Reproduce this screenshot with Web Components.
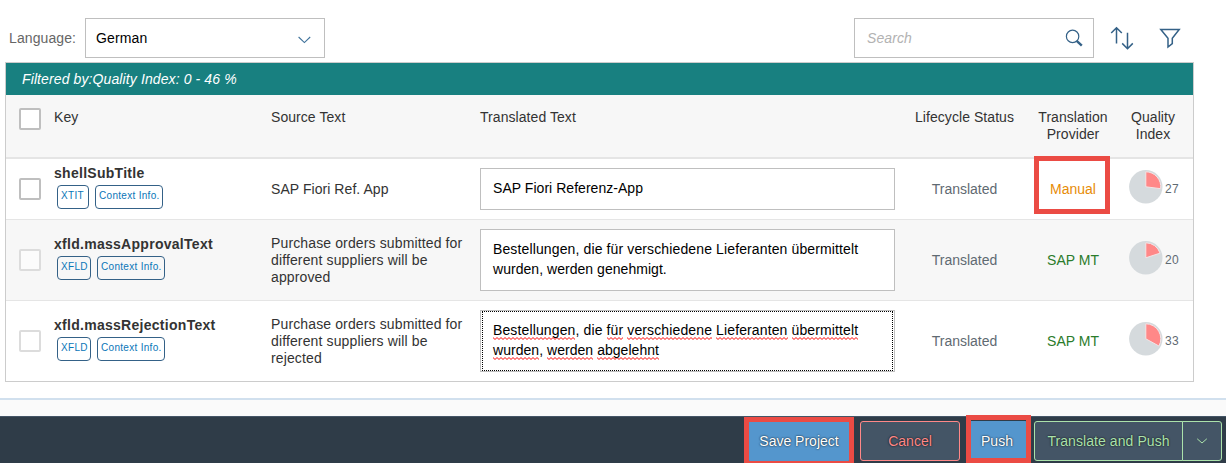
<!DOCTYPE html>
<html lang="en">
<head>
<meta charset="utf-8">
<title>Translation Editor</title>
<style>
html,body{margin:0;padding:0;background:#fff;overflow:hidden}
body{font:14px/17px "Liberation Sans",Arial,sans-serif;color:#333;width:1226px;height:463px}
</style>
</head>
<body>
<translation-page></translation-page>
<script>
const define = (name, html, init) => customElements.define(name, class extends HTMLElement {
  constructor() {
    super();
    const t = document.createElement('template');
    t.innerHTML = html;
    this.attachShadow({ mode: 'open' }).append(t.content.cloneNode(true));
  }
  connectedCallback() { if (init) init(this, this.shadowRoot); }
});

define('select-field', `<style>
:host{display:flex;box-sizing:border-box;width:240px;height:40px;border:1px solid #bfbfbf;background:#fff;align-items:center;justify-content:space-between;padding:0 13px 0 10px;color:#000;letter-spacing:.12px}
svg{display:block;margin-top:3px}
</style><span><slot></slot></span><svg width="13" height="8" viewBox="0 0 13 8"><path d="M.6 1 6.4 6.6 12.2 1" fill="none" stroke="#3f729b" stroke-width="1.1"/></svg>`);

define('search-field', `<style>
:host{display:flex;box-sizing:border-box;width:240px;height:40px;border:1px solid #bfbfbf;background:#fff;align-items:center;justify-content:space-between;padding:0 10px 0 12px;color:#b2b2b2;font-style:italic;letter-spacing:.1px}
svg{display:block}
</style><span><slot></slot></span><svg width="18" height="18" viewBox="0 0 18 18" fill="none" stroke="#346187"><circle cx="7.6" cy="7.4" r="6.2" stroke-width="1.2"/><path d="M11.7 11.8 16.8 16.6" stroke-width="2.4"/></svg>`);

define('tool-bar', `<style>
:host{display:flex;height:44px;padding:18px 45px 0 9px;align-items:flex-start}
.label{color:#666;width:76px;line-height:40px;letter-spacing:.1px}
.gap{flex:1}
.icon{display:flex;height:40px;align-items:center}
.sort{margin-left:16px}.filter{margin-left:25px}
</style>
<span class="label">Language:</span><select-field>German</select-field><span class="gap"></span><search-field>Search</search-field>
<span class="icon sort"><svg width="24" height="24" viewBox="0 0 24 24" fill="none" stroke="#346187" stroke-width="1.5"><path d="M6.5 17.6V2M1.2 7 6.5 1.7 11.8 7"/><path d="M17.5 6.8V22.6M12.2 17.4 17.5 22.7 22.8 17.4"/></svg></span>
<span class="icon filter"><svg width="22" height="22" viewBox="0 0 22 22" fill="none" stroke="#346187" stroke-width="1.5"><path d="M1.8 2.5H20.2L13.3 11.2V16.6L9 20V11.2Z"/></svg></span>`);

define('check-box', `<style>
:host{display:block;box-sizing:border-box;width:22px;height:22px;border:2px solid #bfbfbf;border-radius:2px;background:#fff}
:host([disabled]){border-color:#dcdcdc;background:rgba(255,255,255,.5)}
</style>`);

define('tag-chip', `<style>
:host{display:block;box-sizing:border-box;height:24px;border:1px solid #346187;border-radius:4px;padding:4px 3px 0;font-size:10px;line-height:12px;color:#0a76b8;white-space:nowrap;letter-spacing:.3px}
</style><slot></slot>`);

define('quality-pie', `<style>
:host{display:flex;align-items:center;font-size:12px;color:#5f6a72;letter-spacing:.25px}
svg{display:block;margin-top:-4px;margin-right:2px}
</style><svg width="34" height="34" viewBox="0 0 34 34"><circle cx="16.8" cy="16.8" r="16.7" fill="#d5dadd"/><path fill="#ff8888" stroke="#f3e4e6" stroke-width="1"/></svg><span></span>`,
(h, r) => {
  const v = +h.getAttribute('value'), a = v / 100 * 2 * Math.PI, R = 15;
  r.querySelector('path').setAttribute('d', `M16.8 16.8V${16.8 - R}A${R} ${R} 0 0 1 ${16.8 + R * Math.sin(a)} ${16.8 - R * Math.cos(a)}Z`);
  r.querySelector('span').textContent = v;
});

define('text-area', `<style>
:host{display:block;position:relative;box-sizing:border-box;width:415px;border:1px solid #bfbfbf;background:#fff;color:#000;padding:9px 12px 11px;line-height:20px;white-space:nowrap;letter-spacing:.04px}
:host([focused])::after{content:"";position:absolute;inset:0 1px;border:1px dotted #000}
</style><slot></slot>`);

define('miss-spelled', `<style>
:host{display:inline;padding-bottom:2px;background:url("data:image/svg+xml,%3Csvg xmlns='http://www.w3.org/2000/svg' width='4' height='3'%3E%3Cpath d='M-1 -.5 0 .5 2 2.5 4 .5 5 -.5' fill='none' stroke='red' stroke-width='1'/%3E%3C/svg%3E") left bottom/4px 3px repeat-x}
</style><slot></slot>`);

const COLS = '48px 217px 209px 419px 131px 86px 74px';
define('header-row', `<style>
:host{display:grid;grid-template-columns:${COLS};box-sizing:border-box;height:64px;background:#f7f7f7;border-bottom:2px solid #e5e5e5;padding-top:14px;letter-spacing:.06px}
check-box{margin:-1px 0 0 13px}.c{text-align:center}
</style><check-box></check-box><span>Key</span><span>Source Text</span><span>Translated Text</span><span class="c">Lifecycle Status</span><span class="c">Translation<br>Provider</span><span class="c">Quality<br>Index</span>`);

define('table-row', `<style>
:host{display:grid;grid-template-columns:${COLS};align-items:center;box-sizing:border-box;height:81px;border-bottom:1px solid #e5e5e5}
:host([short]){height:61px}
:host([last]){height:80px;border:0}
:host([alt]){background:#f7f7f7}
check-box{margin-left:13px}
.key b{display:block;letter-spacing:.28px;line-height:17px}
.tags{display:flex;gap:6px;padding:3px 0 0 3px}
.type{width:34px}.info{width:68px}
:host([type=XTIT]) .type{width:32px}
.key{margin-top:-5px}
.source{letter-spacing:.13px}
:host([short]) .source{letter-spacing:.06px}
.c{text-align:center;color:#5f6a72}
.ok{color:#2b7c2b}.manual{color:#e78c07}
quality-pie{padding-left:13px}
</style><check-box></check-box><div class="key"><b></b><div class="tags"><tag-chip class="type"></tag-chip><tag-chip class="info">Context Info.</tag-chip></div></div><div class="source"><slot name="source"></slot></div><div><slot name="target"></slot></div><span class="c">Translated</span><span class="c prov"></span><quality-pie></quality-pie>`,
(h, r) => {
  if (h.hasAttribute('locked')) r.querySelector('check-box').setAttribute('disabled', '');
  r.querySelector('b').textContent = h.getAttribute('key');
  r.querySelector('.type').textContent = h.getAttribute('type');
  const p = r.querySelector('.prov');
  p.textContent = h.getAttribute('provider');
  p.classList.add(h.getAttribute('provider') === 'Manual' ? 'manual' : 'ok');
  const q = r.querySelector('quality-pie');
  const n = document.createElement('quality-pie');
  n.setAttribute('value', h.getAttribute('quality'));
  q.replaceWith(n);
});

define('translation-table', `<style>
:host{display:block;margin-left:5px;box-sizing:border-box;width:1189px;height:320px;border:1px solid #ccc}
.info{background:#188080;color:#fff;height:32px;line-height:32px;font-style:italic;padding-left:16px;letter-spacing:.11px}
</style><div class="info"><slot name="info"></slot></div><header-row></header-row><slot></slot>`);

define('action-button', `<style>
:host{display:flex;box-sizing:border-box;height:40px;border:1px solid #5496cd;border-radius:3px;background:#5496cd;color:#fff;align-items:center;justify-content:center;text-shadow:0 0 2px #000;white-space:nowrap}
:host([kind=reject]){background:#445566;border-color:#ff8888;color:#ff8888}
:host([kind=accept]){background:#445566;border-color:#abe2ab;color:#abe2ab}
</style><slot></slot>`);

define('call-out', `<style>
:host{position:absolute;box-sizing:border-box;border:5px solid #eb4b44;z-index:2}
</style>`);

define('action-footer', `<style>
:host{display:flex;position:relative;box-sizing:border-box;height:47px;background:#2f3c48;border-top:1px solid #445566;padding:4px 4px 0 0;justify-content:flex-end;align-items:flex-start}
.save{width:104px;margin-right:9px}.cancel{width:100px;margin-right:8px}.push{width:60px;margin-right:6px}
.tp{width:149px;border-radius:3px 0 0 3px;letter-spacing:.07px}.more{width:40px;border-radius:0 3px 3px 0;margin-left:-1px}
.push{padding-right:2px}
.f1{left:744px;top:0;width:110px;height:49px}
.f2{left:966px;top:-2px;width:65px;height:48px}
</style>
<action-button class="save">Save Project</action-button><action-button class="cancel" kind="reject">Cancel</action-button><action-button class="push">Push</action-button><action-button class="tp" kind="accept">Translate and Push</action-button><action-button class="more" kind="accept"><svg width="12" height="8" viewBox="0 0 12 8"><path d="M1.2 1.8 6 6 10.8 1.8" fill="none" stroke="#abe2ab" stroke-width="1"/></svg></action-button>
<call-out class="f1"></call-out><call-out class="f2"></call-out>`);

define('translation-page', `<style>
:host{display:block;position:relative;width:1226px;height:463px;overflow:hidden}
.strip{height:16px;margin-top:16px;border-top:2px solid #d1e0ee;background:#fafafa}
.f0{left:1034px;top:156px;width:76px;height:58px}
.wide{letter-spacing:.125px}
</style>
<tool-bar></tool-bar>
<translation-table><span slot="info">Filtered by:Quality Index: 0 - 46 %</span>
<table-row short key="shellSubTitle" type="XTIT" provider="Manual" quality="27"><span slot="source">SAP Fiori Ref. App</span><text-area slot="target">SAP Fiori Referenz-App</text-area></table-row>
<table-row alt locked key="xfld.massApprovalText" type="XFLD" provider="SAP MT" quality="20"><span slot="source">Purchase orders submitted for<br>different suppliers will be<br>approved</span><text-area slot="target"><span class="wide">Bestellungen, die für verschiedene Lieferanten übermittelt</span><br>wurden, werden genehmigt.</text-area></table-row>
<table-row last locked key="xfld.massRejectionText" type="XFLD" provider="SAP MT" quality="33"><span slot="source">Purchase orders submitted for<br>different suppliers will be<br>rejected</span><text-area focused slot="target"><span class="wide"><miss-spelled>Bestellungen</miss-spelled>, die <miss-spelled>für</miss-spelled> <miss-spelled>verschiedene</miss-spelled> <miss-spelled>Lieferanten</miss-spelled> <miss-spelled>übermittelt</miss-spelled></span><br><miss-spelled>wurden</miss-spelled>, <miss-spelled>werden</miss-spelled> <miss-spelled>abgelehnt</miss-spelled></text-area></table-row>
</translation-table>
<div class="strip"></div>
<action-footer></action-footer>
<call-out class="f0"></call-out>`);
</script>
</body>
</html>
